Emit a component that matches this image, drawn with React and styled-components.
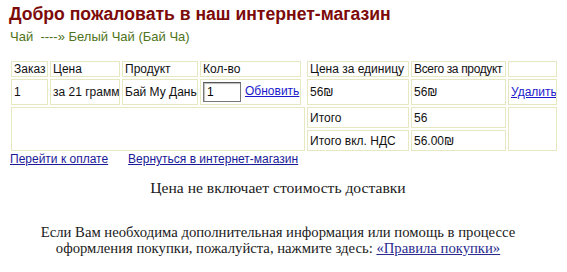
import React from "react";
import styled, { createGlobalStyle } from "styled-components";

const GlobalStyle = createGlobalStyle`
	body {
		margin: 0;
		background: #ffffff;
		font-family: "Liberation Sans", Arial, sans-serif;
	}
`;

const Page = styled.div`
	padding: 4px 9px 0 9px;
	width: 549px;
`;

const Title = styled.h1`
	margin: 0;
	font-size: 17.6px;
	line-height: 21px;
	font-weight: bold;
	color: #7c0a0a;
`;

const Breadcrumb = styled.div`
	margin-top: 4px;
	font-size: 13px;
	line-height: 15px;
	color: #4f7420;
	padding-left: 1px;
`;

const CartTable = styled.table`
	margin-top: 15px;
	border-collapse: separate;
	border-spacing: 2px;
	table-layout: fixed;
	width: 550px;
	font-size: 12px;
	color: #111;
`;

const Cell = styled.td`
	border: 1px solid #e6e8c2;
	padding: 0 2px;
	height: ${(p) => p.h || 16}px;
	letter-spacing: ${(p) => (p.tight ? "-0.35px" : "normal")};
	vertical-align: middle;
	white-space: nowrap;
	overflow: hidden;
	box-sizing: border-box;
`;

const Spacer = styled.td`
	padding: 0;
`;

const QtyInput = styled.input`
	box-sizing: border-box;
	width: 38px;
	height: 20px;
	margin: 0 4px 0 0;
	padding: 1px 3px;
	border: 1px solid #777;
	border-top-color: #555;
	box-shadow: inset 1px 1px 1px #bbb;
	font: 12px "Liberation Sans", Arial, sans-serif;
	vertical-align: middle;
`;

const A = styled.a`
	color: #1a1acc;
	text-decoration: underline;
	cursor: pointer;
`;

const Actions = styled.div`
	display: flex;
	gap: 20px;
	font-size: 12px;
	line-height: 14px;
	padding-left: 1px;
	margin-top: -1px;

	a {
		color: #1a1a99;
	}
`;

const Note = styled.p`
	margin: 13px 0 0 0;
	width: 538px;
	text-align: center;
	font-family: "Liberation Serif", "Times New Roman", serif;
	font-size: 15.6px;
	line-height: 18px;
	color: #1a1a1a;
`;

const Help = styled(Note)`
	margin-top: 27px;
	font-size: 14.7px;
	line-height: 16px;

	a {
		color: #2b2b8f;
	}
`;

export default function App() {
	return (
		<>
			<GlobalStyle />
			<Page>
				<Title>Добро пожаловать в наш интернет-магазин</Title>
				<Breadcrumb>Чай &nbsp;----» Белый Чай (Бай Ча)</Breadcrumb>
				<CartTable>
					<colgroup>
						<col style={{ width: 37 }} />
						<col style={{ width: 70 }} />
						<col style={{ width: 76 }} />
						<col style={{ width: 101 }} />
						<col style={{ width: 2 }} />
						<col style={{ width: 102 }} />
						<col style={{ width: 95 }} />
						<col style={{ width: 49 }} />
					</colgroup>
					<tbody>
						<tr>
							<Cell>Заказ</Cell>
							<Cell>Цена</Cell>
							<Cell>Продукт</Cell>
							<Cell>Кол-во</Cell>
							<Spacer />
							<Cell>Цена за единицу</Cell>
							<Cell tight>Всего за продукт</Cell>
							<Cell />
						</tr>
						<tr>
							<Cell h={26}>1</Cell>
							<Cell h={26}>за 21 грамм</Cell>
							<Cell h={26}>Бай Му Дань</Cell>
							<Cell h={26}>
								<QtyInput defaultValue="1" />
								<A>Обновить</A>
							</Cell>
							<Spacer />
							<Cell h={26}>56₪</Cell>
							<Cell h={26}>56₪</Cell>
							<Cell h={26}>
								<A>Удалить</A>
							</Cell>
						</tr>
						<tr>
							<Cell colSpan={5} rowSpan={2} />
							<Cell h={21}>Итого</Cell>
							<Cell h={21}>56</Cell>
							<Cell rowSpan={2} />
						</tr>
						<tr>
							<Cell h={21}>Итого вкл. НДС</Cell>
							<Cell h={21}>56.00₪</Cell>
						</tr>
					</tbody>
				</CartTable>
				<Actions>
					<A>Перейти к оплате</A>
					<A>Вернуться в интернет-магазин</A>
				</Actions>
				<Note>Цена не включает стоимость доставки</Note>
				<Help>
					Если Вам необходима дополнительная информация или помощь в процессе
					оформления покупки, пожалуйста, нажмите здесь: <A>«Правила покупки»</A>
				</Help>
			</Page>
		</>
	);
}
